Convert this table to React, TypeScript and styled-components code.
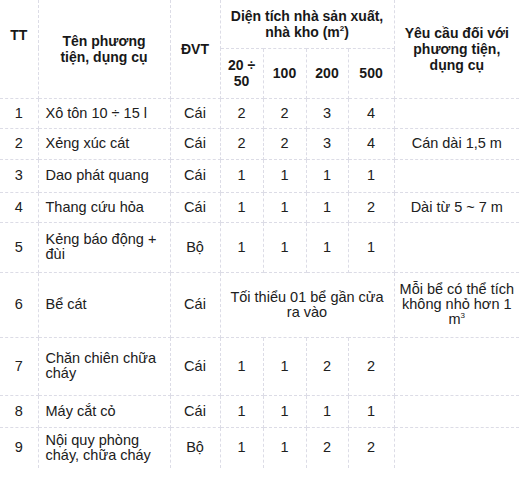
import React from "react";
import styled, { createGlobalStyle } from "styled-components";

const GlobalStyle = createGlobalStyle`
  html, body {
    margin: 0;
    padding: 0;
    background: #ffffff;
  }
  body {
    font-family: "Liberation Sans", Arial, sans-serif;
    color: #202020;
  }
`;

const Page = styled.div`
  width: 519px;
  height: 477px;
  background: #fff;
  overflow: hidden;
`;

const Table = styled.table`
  width: 519px;
  border-collapse: collapse;
  border-style: hidden;
  table-layout: fixed;
  font-size: 14.5px;
  line-height: 15px;
`;

const Row = styled.tr<{ $h: number }>`
  height: ${(p) => p.$h}px;
`;

const Head = styled.th<{ $top?: boolean }>`
  font-weight: bold;
  font-size: 14px;
  line-height: 16px;
  text-align: center;
  vertical-align: ${(p) => (p.$top ? "top" : "middle")};
  padding: ${(p) => (p.$top ? "27px 2px 0" : "0 2px")};
  border: 1px dashed #dcdce6;
  color: #181818;
`;

const Cell = styled.td<{ $left?: boolean }>`
  text-align: ${(p) => (p.$left ? "left" : "center")};
  vertical-align: middle;
  padding: ${(p) => (p.$left ? "0 4px 0 7px" : "0 2px")};
  border: 1px dashed #dcdce6;
`;

const Sup = styled.sup`
  font-size: 8px;
  line-height: 0;
  vertical-align: 6px;
`;

type Item = {
  tt: string;
  name: React.ReactNode;
  unit: string;
  vals: string[] | null;
  note: React.ReactNode;
  h: number;
};

const items: Item[] = [
  { tt: "1", name: "Xô tôn 10 ÷ 15 l", unit: "Cái", vals: ["2", "2", "3", "4"], note: "", h: 30 },
  { tt: "2", name: "Xẻng xúc cát", unit: "Cái", vals: ["2", "2", "3", "4"], note: "Cán dài 1,5 m", h: 31 },
  { tt: "3", name: "Dao phát quang", unit: "Cái", vals: ["1", "1", "1", "1"], note: "", h: 33 },
  { tt: "4", name: "Thang cứu hỏa", unit: "Cái", vals: ["1", "1", "1", "2"], note: "Dài từ 5 ~ 7 m", h: 30 },
  {
    tt: "5",
    name: (
      <>
        Kẻng báo động +<br />
        đùi
      </>
    ),
    unit: "Bộ",
    vals: ["1", "1", "1", "1"],
    note: "",
    h: 50,
  },
  {
    tt: "6",
    name: "Bể cát",
    unit: "Cái",
    vals: null,
    note: (
      <>
        Mỗi bể có thể tích
        <br />
        không nhỏ hơn 1
        <br />m<Sup>3</Sup>
      </>
    ),
    h: 65,
  },
  {
    tt: "7",
    name: (
      <>
        Chăn chiên chữa
        <br />
        cháy
      </>
    ),
    unit: "Cái",
    vals: ["1", "1", "2", "2"],
    note: "",
    h: 58,
  },
  { tt: "8", name: "Máy cắt cỏ", unit: "Cái", vals: ["1", "1", "1", "1"], note: "", h: 32 },
  {
    tt: "9",
    name: (
      <>
        Nội quy phòng
        <br />
        cháy, chữa cháy
      </>
    ),
    unit: "Bộ",
    vals: ["1", "1", "2", "2"],
    note: "",
    h: 41,
  },
];

export default function App() {
  return (
    <Page>
      <GlobalStyle />
      <Table>
        <colgroup>
          <col style={{ width: 38 }} />
          <col style={{ width: 132 }} />
          <col style={{ width: 50 }} />
          <col style={{ width: 43 }} />
          <col style={{ width: 43 }} />
          <col style={{ width: 42 }} />
          <col style={{ width: 46 }} />
          <col style={{ width: 125 }} />
        </colgroup>
        <thead>
          <Row $h={48}>
            <Head rowSpan={2} $top>
              TT
            </Head>
            <Head rowSpan={2}>
              Tên phương
              <br />
              tiện, dụng cụ
            </Head>
            <Head rowSpan={2}>ĐVT</Head>
            <Head colSpan={4}>
              Diện tích nhà sản xuất,
              <br />
              nhà kho (m<Sup>2</Sup>)
            </Head>
            <Head rowSpan={2}>
              Yêu cầu đối với
              <br />
              phương tiện,
              <br />
              dụng cụ
            </Head>
          </Row>
          <Row $h={50}>
            <Head>
              20 ÷
              <br />
              50
            </Head>
            <Head>100</Head>
            <Head>200</Head>
            <Head>500</Head>
          </Row>
        </thead>
        <tbody>
          {items.map((it) => (
            <Row key={it.tt} $h={it.h}>
              <Cell>{it.tt}</Cell>
              <Cell $left>{it.name}</Cell>
              <Cell>{it.unit}</Cell>
              {it.vals ? (
                it.vals.map((v, i) => <Cell key={i}>{v}</Cell>)
              ) : (
                <Cell colSpan={4}>
                  Tối thiểu 01 bể gần cửa
                  <br />
                  ra vào
                </Cell>
              )}
              <Cell>{it.note}</Cell>
            </Row>
          ))}
        </tbody>
      </Table>
    </Page>
  );
}
